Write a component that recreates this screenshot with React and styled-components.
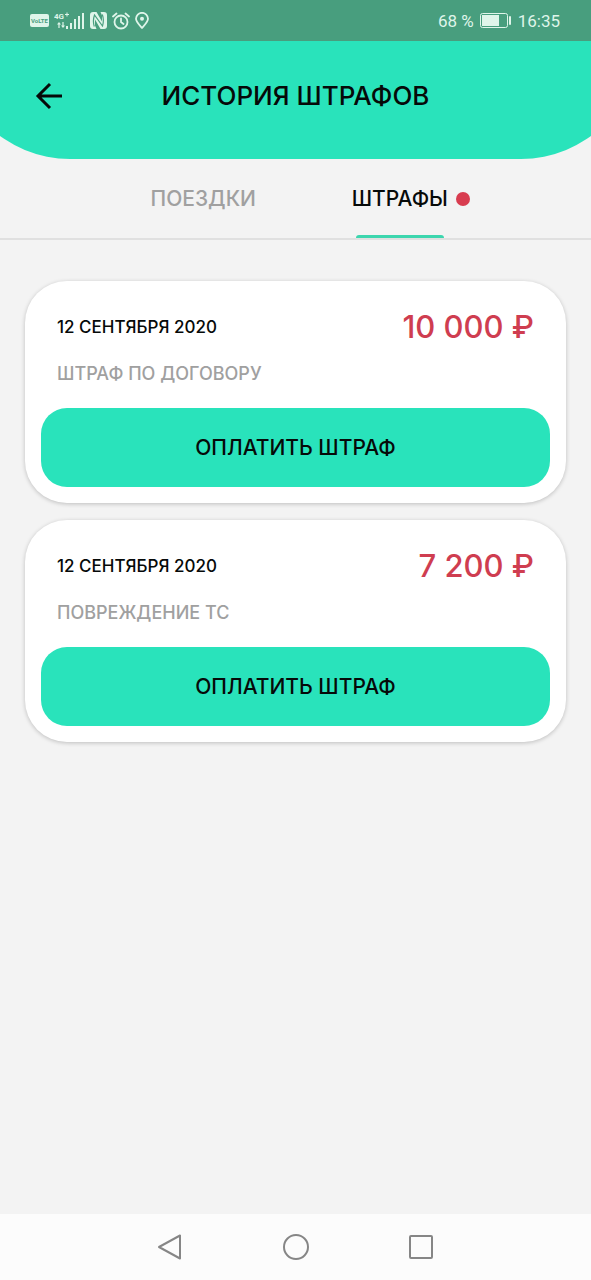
import React from "react";
import styled, { createGlobalStyle } from "styled-components";

const GlobalStyle = createGlobalStyle`
  *, *::before, *::after { box-sizing: border-box; }
  body {
    margin: 0;
    background: #f3f3f3;
    color: #060a09;
    font-family: Inter, "Noto Sans", sans-serif;
  }
  button { font: inherit; color: inherit; border: 0; padding: 0; background: none; cursor: pointer; }
  svg { display: block; }
`;

const Screen = styled.div`
  min-height: 100vh;
  display: flex;
  flex-direction: column;
  overflow-x: hidden;
`;

const StatusBar = styled.div`
  height: 41px;
  flex: none;
  padding: 0 31px 0 30px;
  display: flex;
  align-items: center;
  justify-content: space-between;
  background: #489e7e;
  color: #dff5ea;
  font-family: Roboto, sans-serif;
  font-size: 17px;
  line-height: 20px;
`;

const StatusGroup = styled.div`
  display: flex;
  align-items: center;
  gap: ${(p) => p.$gap}px;
`;

const Header = styled.header`
  height: 118px;
  flex: none;
  margin: 0 -48px;
  padding: 0 72px 8px;
  display: grid;
  grid-template-columns: 50px 1fr 50px;
  align-items: center;
  background: #29e3bb;
  border-radius: 0 0 118px 118px;
`;

const BackButton = styled.button`
  width: 50px;
  height: 50px;
  display: grid;
  place-items: center;
`;

const Title = styled.h1`
  margin: 0;
  text-align: center;
  font-size: 26px;
  line-height: 32px;
  font-weight: 500;
  white-space: nowrap;
`;

const Tabs = styled.div`
  height: 81px;
  flex: none;
  padding: 0 93px 0 105px;
  display: grid;
  grid-template-columns: 1fr 1fr;
  border-bottom: 2px solid #e0e0e0;
`;

const Tab = styled.button`
  padding-top: 3px;
  display: grid;
  grid-template-rows: 1fr 3px;
  place-items: center;
  font-size: 21px;
  line-height: 28px;
  font-weight: 500;
  color: ${(p) => (p.$active ? "#060a09" : "#a0a0a0")};

  &::after {
    content: "";
    width: 88px;
    height: 3px;
    border-radius: 3px 3px 0 0;
    background: ${(p) => (p.$active ? "#3dd6ae" : "transparent")};
  }
`;

const TabLabel = styled.span`
  position: relative;
`;

const Dot = styled.span`
  position: absolute;
  left: calc(100% + 8px);
  top: 7px;
  width: 14px;
  height: 14px;
  border-radius: 50%;
  background: #d83c4f;
`;

const FineList = styled.main`
  flex: 1;
  padding: 41px 25px;
  display: flex;
  flex-direction: column;
  gap: 17px;
`;

const Card = styled.article`
  padding: 24px 16px 16px;
  border-radius: 42px;
  background: #fff;
  box-shadow: 0 1px 4px rgba(0, 0, 0, 0.22);
`;

const CardHead = styled.div`
  padding: 0 16px;
  display: flex;
  align-items: center;
  justify-content: space-between;
`;

const DateText = styled.time`
  font-size: 17px;
  line-height: 24px;
  font-weight: 500;
`;

const Amount = styled.strong`
  font-size: 31px;
  line-height: 44px;
  font-weight: 500;
  color: #cf3d50;
`;

const Reason = styled.p`
  margin: 13px 16px 22px;
  font-size: 18px;
  line-height: 24px;
  font-weight: 500;
  color: #a0a0a0;
`;

const PayButton = styled.button`
  && {
    width: 100%;
    height: 79px;
    border-radius: 26px;
    background: #29e3bb;
    font-size: 21px;
    line-height: 28px;
    font-weight: 500;
  }
`;

const NavBar = styled.nav`
  height: 66px;
  flex: none;
  display: flex;
  align-items: center;
  justify-content: center;
  gap: 77px;
  background: #fcfcfc;
`;

const NavButton = styled.button`
  width: 48px;
  height: 48px;
  display: grid;
  place-items: center;
`;

const VolteIcon = () => (
  <svg width="19" height="13" viewBox="0 0 19 13" aria-hidden="true">
    <rect width="19" height="13" rx="2" fill="currentColor" />
    <text x="9.5" y="9" textAnchor="middle" fontSize="6" fontWeight="700" fontFamily="Roboto" fill="#489e7e">VoLTE</text>
  </svg>
);

const SignalIcon = () => (
  <svg width="31" height="19" viewBox="0 0 31 19" fill="currentColor" aria-hidden="true">
    <text x="0" y="8" fontSize="8" fontWeight="700" fontFamily="Roboto">4G</text>
    <path d="M11 3h1.5V1.5h1V3H15v1h-1.5v1.5h-1V4H11z" />
    <path d="M5 11l2 2.500H5.600V17H4.400v-3.500H3zM8.400 11h1.200v3.500H11L9 17l-2-2.500h1.400z" />
    <path d="M12 15h2v3h-2zM16 12h2v6h-2zM20 8h2v10h-2zM24 5h2v13h-2zM28 2h2v16h-2z" />
  </svg>
);

const NfcIcon = () => (
  <svg width="17" height="17" viewBox="0 0 17 17" aria-hidden="true">
    <path fill="currentColor" d="M3 0h3.500L12 9.500V3.500L10.500 0H14a3 3 0 0 1 3 3v11a3 3 0 0 1-3 3h-3.500L5 7.500v6L6.500 17H3a3 3 0 0 1-3-3V3a3 3 0 0 1 3-3z" />
    <path fill="none" stroke="#489e7e" strokeWidth="1.200" d="M4.300 14.500c-1-3-1-8 .2-11.500l8 11c1-3 1-8-.2-11.500" />
  </svg>
);

const AlarmIcon = () => (
  <svg width="18" height="18" viewBox="0 0 18 18" fill="none" stroke="currentColor" strokeWidth="1.800" strokeLinecap="round" aria-hidden="true">
    <circle cx="9" cy="10" r="6.500" />
    <path d="M9 6.500V10l2.500 2M1 4.500L4.500 1.500M17 4.500L13.500 1.500" />
  </svg>
);

const PinIcon = () => (
  <svg width="14" height="17" viewBox="0 0 14 17" fill="none" stroke="currentColor" strokeWidth="1.800" aria-hidden="true">
    <path d="M7 15.800C4.500 13 1 10 1 6.800a6 6 0 0 1 12 0C13 10 9.500 13 7 15.800z" />
    <circle cx="7" cy="6.800" r="2" fill="currentColor" stroke="none" />
  </svg>
);

const BatteryIcon = () => (
  <svg width="32" height="15" viewBox="0 0 32 15" aria-hidden="true">
    <rect x="0.500" y="0.500" width="27" height="14" rx="2" fill="none" stroke="currentColor" />
    <rect x="2" y="2" width="17" height="11" fill="currentColor" />
    <rect x="29" y="3" width="2" height="9" rx="1" fill="currentColor" />
  </svg>
);

const BackIcon = () => (
  <svg width="28" height="28" viewBox="0 0 28 28" fill="none" stroke="currentColor" strokeWidth="3" aria-hidden="true">
    <path d="M27 14H3M15 2L3 14l12 12" />
  </svg>
);

const NavIcon = ({ children }) => (
  <svg width="28" height="28" viewBox="0 0 28 28" fill="none" stroke="#868686" strokeWidth="2" strokeLinejoin="round" aria-hidden="true">
    {children}
  </svg>
);

const fines = [
  { id: 1, amount: "10 000 ₽", reason: "ШТРАФ ПО ДОГОВОРУ" },
  { id: 2, amount: "7 200 ₽", reason: "ПОВРЕЖДЕНИЕ ТС" },
];

export default function App() {
  return (
    <Screen>
      <GlobalStyle />
      <StatusBar>
        <StatusGroup $gap={5}>
          <VolteIcon />
          <SignalIcon />
          <NfcIcon />
          <AlarmIcon />
          <PinIcon />
        </StatusGroup>
        <StatusGroup $gap={6}>
          <span>68 %</span>
          <BatteryIcon />
          <span>16:35</span>
        </StatusGroup>
      </StatusBar>
      <Header>
        <BackButton aria-label="Назад"><BackIcon /></BackButton>
        <Title>ИСТОРИЯ ШТРАФОВ</Title>
      </Header>
      <Tabs role="tablist">
        <Tab role="tab" aria-selected="false"><TabLabel>ПОЕЗДКИ</TabLabel></Tab>
        <Tab role="tab" aria-selected="true" $active>
          <TabLabel>ШТРАФЫ<Dot /></TabLabel>
        </Tab>
      </Tabs>
      <FineList>
        {fines.map((fine) => (
          <Card key={fine.id}>
            <CardHead>
              <DateText dateTime="2020-09-12">12 СЕНТЯБРЯ 2020</DateText>
              <Amount>{fine.amount}</Amount>
            </CardHead>
            <Reason>{fine.reason}</Reason>
            <PayButton>ОПЛАТИТЬ ШТРАФ</PayButton>
          </Card>
        ))}
      </FineList>
      <NavBar>
        <NavButton aria-label="Назад">
          <NavIcon><path d="M23 2.500v23L2 14z" /></NavIcon>
        </NavButton>
        <NavButton aria-label="Домой">
          <NavIcon><circle cx="14" cy="14" r="12" /></NavIcon>
        </NavButton>
        <NavButton aria-label="Недавние">
          <NavIcon><rect x="3" y="3" width="22" height="22" rx="1" /></NavIcon>
        </NavButton>
      </NavBar>
    </Screen>
  );
}
